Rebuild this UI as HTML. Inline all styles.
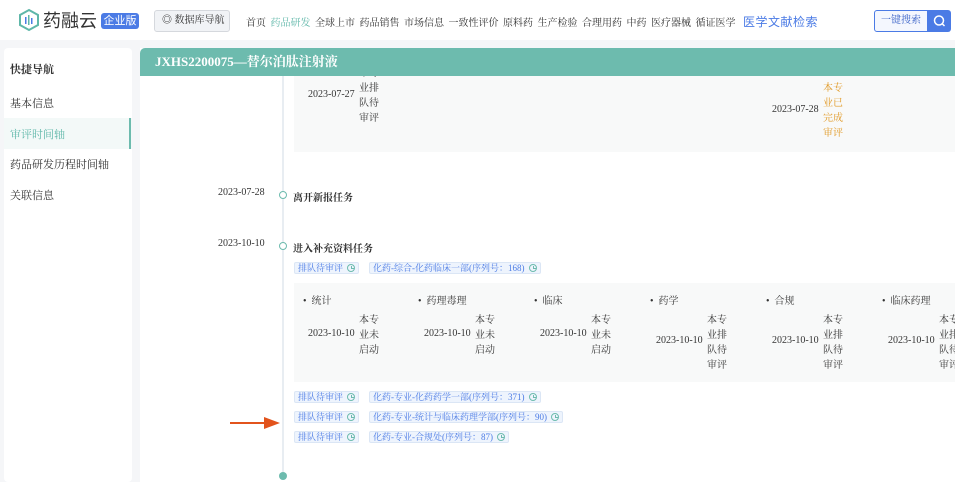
<!DOCTYPE html>
<html><head><meta charset="utf-8"><style>
*{margin:0;padding:0;box-sizing:border-box}
body{width:955px;height:482px;overflow:hidden;background:#f5f6f8;font-family:"Liberation Serif","Noto Serif CJK SC",serif;color:#333;position:relative;font-size:10px}
.a{position:absolute;white-space:nowrap}
.hdr{position:absolute;left:0;top:0;width:955px;height:40px;background:#fff}
.nav span{margin-right:4.5px}
.side{position:absolute;left:4px;top:48px;width:128px;height:434px;background:#fff;border-radius:4px}
.main{position:absolute;left:140px;top:48px;width:815px;height:434px;background:#fff}
.title{position:absolute;left:140px;top:48px;width:815px;height:28px;background:#6dbbae;border-radius:5px 0 0 0;color:#fff;font-weight:bold;font-size:13px;line-height:28px;padding-left:15px}
.box{position:absolute;left:294px;width:661px;background:#f8f9f9}
.dot{position:absolute;width:8px;height:8px;border:1.5px solid #6dbbae;border-radius:50%;background:#fff}
.tag{position:absolute;height:12px;border:1px solid #dbe6f5;background:#eef4fd;color:#4b7be5;font-size:9px;line-height:10px;padding:0 3px;border-radius:2px;white-space:nowrap}
.clk{display:inline-block;width:8px;height:8px;border:1px solid #6dbbae;border-radius:50%;margin-left:4px;vertical-align:-1px;position:relative}
.clk:after{content:"";position:absolute;left:3px;top:1px;width:2px;height:2px;border-left:1px solid #6dbbae;border-bottom:1px solid #6dbbae}
.st{position:absolute;line-height:15px;font-size:10px;white-space:nowrap;width:30px}
</style></head><body>
<div class="hdr"></div>
<svg class="a" style="left:17px;top:8px" width="24" height="24" viewBox="0 0 24 24"><path d="M12 2 L21 7 V17 L12 22 L3 17 V7 Z" fill="none" stroke="#5fb7a9" stroke-width="2"/><rect x="8" y="9" width="1.5" height="7" fill="#4b7be5"/><rect x="11" y="7" width="1.5" height="10" fill="#5fb7a9"/><rect x="14" y="10" width="1.5" height="6" fill="#4b7be5"/></svg>
<div class="a" style="left:43px;top:7px;font-size:18px;font-family:'Liberation Sans','Noto Sans CJK SC',sans-serif;color:#333">药融云</div>
<div class="a" style="left:101px;top:13px;height:16px;width:38px;background:#4b7be5;color:#fff;border-radius:3px;font-size:11px;line-height:16px;text-align:center;font-family:'Liberation Sans','Noto Sans CJK SC',sans-serif">企业版</div>
<div class="a" style="left:154px;top:10px;width:76px;height:22px;border:1px solid #d5d8dd;background:#f1f3f6;border-radius:3px;font-size:10px;line-height:20px;padding-left:7px">◎ 数据库导航</div>
<div class="a nav" style="left:246px;top:14px;font-size:10px"><span>首页</span><span style="color:#5fb7a9">药品研发</span><span>全球上市</span><span>药品销售</span><span>市场信息</span><span>一致性评价</span><span>原料药</span><span>生产检验</span><span>合理用药</span><span>中药</span><span>医疗器械</span><span>循证医学</span></div>
<div class="a" style="left:743px;top:13px;font-size:12px;color:#4b7be5;font-family:'Liberation Sans','Noto Sans CJK SC',sans-serif;letter-spacing:0.5px">医学文献检索</div>
<div class="a" style="left:874px;top:10px;width:54px;height:22px;border:1px solid #4b7be5;border-radius:3px 0 0 3px;background:#f4f7fe;color:#3a63c8;font-size:10px;line-height:20px;text-align:center">一键搜索</div>
<div class="a" style="left:928px;top:10px;width:23px;height:22px;background:#4b7be5;border-radius:0 3px 3px 0"><svg width="23" height="22"><circle cx="11" cy="10.5" r="4.5" fill="none" stroke="#fff" stroke-width="1.5"/><path d="M14.3 13.8 L16.5 16" stroke="#fff" stroke-width="1.5"/></svg></div>

<div class="side"></div>
<div class="a" style="left:10px;top:61px;font-size:11px;font-weight:bold">快捷导航</div>
<div class="a" style="left:10px;top:95px;font-size:11px">基本信息</div>
<div class="a" style="left:4px;top:118px;width:128px;height:31px;background:#f3f9f8"></div>
<div class="a" style="left:129px;top:118px;width:2px;height:31px;background:#6dbbae"></div>
<div class="a" style="left:10px;top:126px;font-size:11px;color:#5fb7a9">审评时间轴</div>
<div class="a" style="left:10px;top:156px;font-size:11px">药品研发历程时间轴</div>
<div class="a" style="left:10px;top:187px;font-size:11px">关联信息</div>

<div class="main"></div>
<div class="a" style="left:282px;top:76px;width:2px;height:400px;background:#e8edf2"></div>
<div class="box" style="top:76px;height:76px"></div>
<div class="a" style="left:308px;top:89px">2023-07-27</div>
<div class="st" style="left:359px;top:66px">本专<br>业排<br>队待<br>审评</div>
<div class="a" style="left:772px;top:104px">2023-07-28</div>
<div class="st" style="left:823px;top:81px;color:#e0961e">本专<br>业已<br>完成<br>审评</div>
<div class="title">JXHS2200075—替尔泊肽注射液</div>

<div class="a" style="left:218px;top:187px">2023-07-28</div>
<div class="dot" style="left:279px;top:191px"></div>
<div class="a" style="left:293px;top:189px;font-weight:bold">离开新报任务</div>

<div class="a" style="left:218px;top:238px">2023-10-10</div>
<div class="dot" style="left:279px;top:242px"></div>
<div class="a" style="left:293px;top:240px;font-weight:bold">进入补充资料任务</div>
<div class="tag" style="left:294px;top:262px">排队待审评<span class="clk"></span></div>
<div class="tag" style="left:369px;top:262px">化药-综合-化药临床一部(序列号：168)<span class="clk"></span></div>

<div class="box" style="top:283px;height:99px"></div>
<div class="a" style="left:303px;top:292px">•&nbsp;&nbsp;统计</div>
<div class="a" style="left:418px;top:292px">•&nbsp;&nbsp;药理毒理</div>
<div class="a" style="left:534px;top:292px">•&nbsp;&nbsp;临床</div>
<div class="a" style="left:650px;top:292px">•&nbsp;&nbsp;药学</div>
<div class="a" style="left:766px;top:292px">•&nbsp;&nbsp;合规</div>
<div class="a" style="left:882px;top:292px">•&nbsp;&nbsp;临床药理</div>
<div class="a" style="left:308px;top:328px">2023-10-10</div><div class="st" style="left:359px;top:313px">本专<br>业未<br>启动</div>
<div class="a" style="left:424px;top:328px">2023-10-10</div><div class="st" style="left:475px;top:313px">本专<br>业未<br>启动</div>
<div class="a" style="left:540px;top:328px">2023-10-10</div><div class="st" style="left:591px;top:313px">本专<br>业未<br>启动</div>
<div class="a" style="left:656px;top:335px">2023-10-10</div><div class="st" style="left:707px;top:313px">本专<br>业排<br>队待<br>审评</div>
<div class="a" style="left:772px;top:335px">2023-10-10</div><div class="st" style="left:823px;top:313px">本专<br>业排<br>队待<br>审评</div>
<div class="a" style="left:888px;top:335px">2023-10-10</div><div class="st" style="left:939px;top:313px">本专<br>业排<br>队待<br>审评</div>

<div class="tag" style="left:294px;top:391px">排队待审评<span class="clk"></span></div>
<div class="tag" style="left:369px;top:391px">化药-专业-化药药学一部(序列号：371)<span class="clk"></span></div>
<div class="tag" style="left:294px;top:411px">排队待审评<span class="clk"></span></div>
<div class="tag" style="left:369px;top:411px">化药-专业-统计与临床药理学部(序列号：90)<span class="clk"></span></div>
<div class="tag" style="left:294px;top:431px">排队待审评<span class="clk"></span></div>
<div class="tag" style="left:369px;top:431px">化药-专业-合规处(序列号：87)<span class="clk"></span></div>
<svg class="a" style="left:228px;top:416px" width="54" height="14"><path d="M2 7 H40" stroke="#e2531c" stroke-width="2"/><path d="M36 1 L52 7 L36 13 Z" fill="#e2531c"/></svg>
<div class="a" style="left:279px;top:472px;width:8px;height:8px;border-radius:50%;background:#6dbbae"></div>
</body></html>
